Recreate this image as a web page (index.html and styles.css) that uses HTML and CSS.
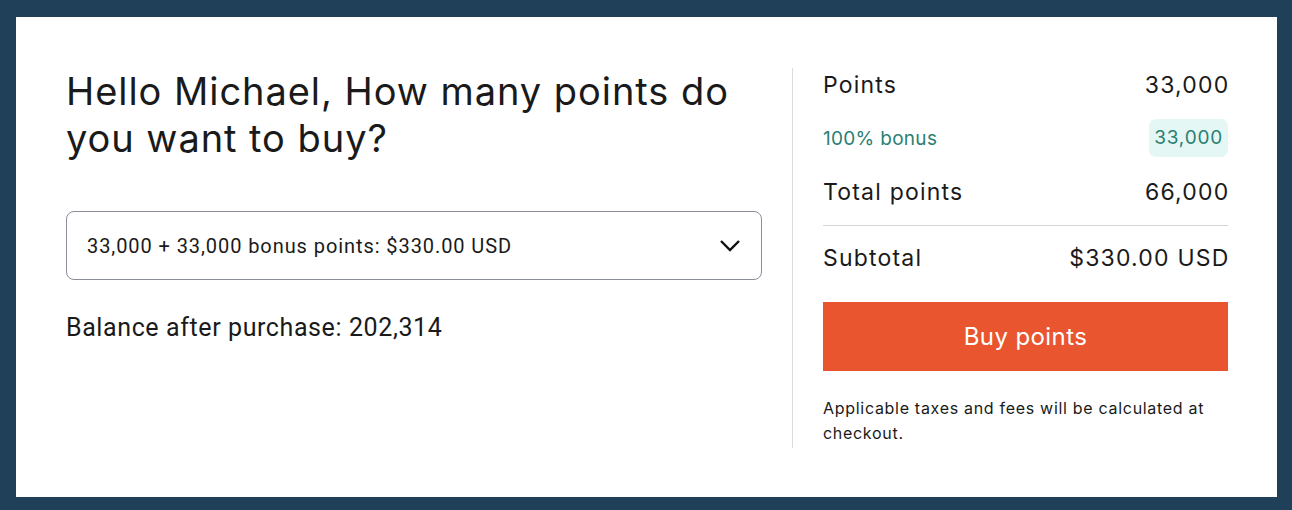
FILE: index.html
```html
<!DOCTYPE html>
<html>
    <head>
        <title>Buy points</title>
        <link rel="stylesheet" href="styles.css">
    </head>
    <body>
        <div class="card">
            <div class="chooser">
                <h1>Hello Michael, How many points do you want to buy?</h1>

                <div class="select_box">
                    <span>33,000 + 33,000 bonus points: $330.00 USD</span>
                    <svg class="chevron" width="22" height="14" viewBox="0 0 22 14">
                        <path d="M2 2 L11 11 L20 2" fill="none" stroke="#111" stroke-width="2.4"/>
                    </svg>
                </div>

                <p class="balance">Balance after purchase: 202,314</p>
            </div>

            <div class="summary">
                <div class="row">
                    <span>Points</span>
                    <span class="value">33,000</span>
                </div>
                <div class="row bonus">
                    <span>100% bonus</span>
                    <span class="badge">33,000</span>
                </div>
                <div class="row">
                    <span>Total points</span>
                    <span class="value">66,000</span>
                </div>
                <div class="row subtotal">
                    <span>Subtotal</span>
                    <span class="value">$330.00 USD</span>
                </div>
                <button class="buy">Buy points</button>
                <p class="note">Applicable taxes and fees will be calculated at checkout.</p>
            </div>
        </div>
    </body>
</html>
```

FILE: styles.css
```css
html, body {
    margin: 0;
    padding: 0;
}
body {
    background-color: #1f4058;
    padding: 17px 15px 14px 16px;
    font-family: "Inter", "Noto Sans", sans-serif;
    color: #1a1a1a;
}
.card {
    background-color: white;
    height: 480px;
    box-sizing: border-box;
    padding: 51px 49px 49px 50px;
    display: flex;
}
.chooser {
    width: 696px;
    padding-right: 30px;
    border-right: 1px solid #dcdcdc;
}
h1 {
    font-weight: 400;
    font-size: 38px;
    line-height: 47px;
    margin: 0;
    letter-spacing: 0.95px;
}
.select_box {
    margin-top: 49px;
    height: 69px;
    box-sizing: border-box;
    border: 1px solid #8a8e99;
    border-radius: 8px;
    display: flex;
    align-items: center;
    justify-content: space-between;
    padding: 0 20px 0 20px;
    font-family: "Roboto", sans-serif;
    font-size: 20px;
    letter-spacing: 0.92px;
}
.balance {
    font-family: "Roboto", sans-serif;
    font-size: 25px;
    letter-spacing: 0.6px;
    margin: 33px 0 0 0;
}
.summary {
    flex: 1;
    padding-left: 30px;
}
.row {
    display: flex;
    justify-content: space-between;
    align-items: center;
    font-size: 23px;
    letter-spacing: 1.2px;
    height: 34px;
}
.value {
    margin-right: -1.5px;
}
.bonus {
    color: #2a8073;
    font-size: 19px;
    letter-spacing: 0.3px;
    height: 38px;
    margin: 17px 0 18px 0;
}
.badge {
    background-color: #e5f7f4;
    border-radius: 7px;
    padding: 0 5px;
    line-height: 38px;
    letter-spacing: 0.8px;
}
.subtotal {
    border-top: 1px solid #d5d5d5;
    margin-top: 16px;
    padding-top: 15px;
}
.buy {
    display: block;
    width: 100%;
    height: 69px;
    margin-top: 27px;
    border: none;
    background-color: #e8552f;
    color: white;
    font-family: "Inter", sans-serif;
    font-size: 24px;
    letter-spacing: 0.4px;
}
.note {
    font-size: 16px;
    letter-spacing: 0.7px;
    line-height: 25px;
    margin: 25px 0 0 0;
}
```
